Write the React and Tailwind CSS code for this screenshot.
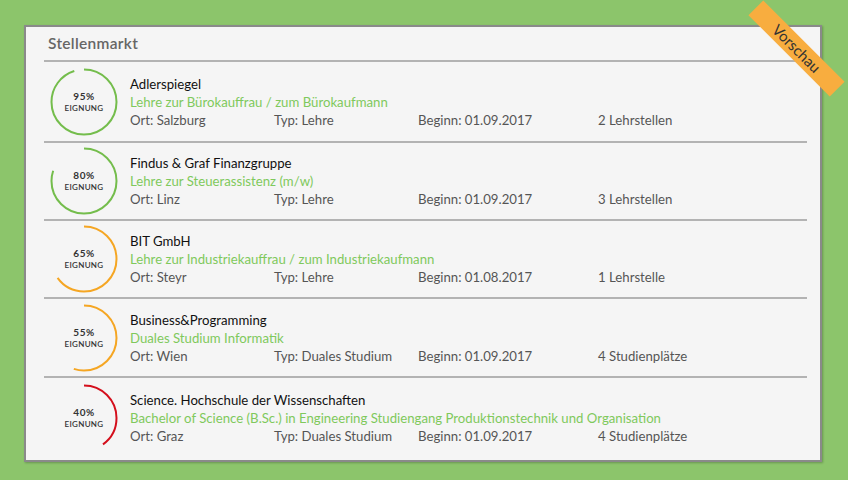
const JOBS = [
  {
    score: 95,
    color: "#74bd4c",
    company: "Adlerspiegel",
    title: "Lehre zur Bürokauffrau / zum Bürokaufmann",
    ort: "Salzburg",
    typ: "Lehre",
    beginn: "01.09.2017",
    places: "2 Lehrstellen",
    h: "h-[81px]",
  },
  {
    score: 80,
    color: "#74bd4c",
    company: "Findus & Graf Finanzgruppe",
    title: "Lehre zur Steuerassistenz (m/w)",
    ort: "Linz",
    typ: "Lehre",
    beginn: "01.09.2017",
    places: "3 Lehrstellen",
    h: "h-[78px]",
  },
  {
    score: 65,
    color: "#f5a623",
    company: "BIT GmbH",
    title: "Lehre zur Industriekauffrau / zum Industriekaufmann",
    ort: "Steyr",
    typ: "Lehre",
    beginn: "01.08.2017",
    places: "1 Lehrstelle",
    h: "h-[78px]",
  },
  {
    score: 55,
    color: "#f5a623",
    company: "Business&Programming",
    title: "Duales Studium Informatik",
    ort: "Wien",
    typ: "Duales Studium",
    beginn: "01.09.2017",
    places: "4 Studienplätze",
    h: "h-[79px]",
  },
  {
    score: 40,
    color: "#d40f1c",
    company: "Science. Hochschule der Wissenschaften",
    title: "Bachelor of Science (B.Sc.) in Engineering Studiengang Produktionstechnik und Organisation",
    ort: "Graz",
    typ: "Duales Studium",
    beginn: "01.09.2017",
    places: "4 Studienplätze",
    h: "h-[80px]",
  },
];

function Ring({ score, color }) {
  const r = 32.5;
  const c = 2 * Math.PI * r;
  return (
    <div className="relative h-[68px] w-[68px] shrink-0">
      <svg width="68" height="68" viewBox="0 0 68 68" className="absolute inset-0">
        <circle
          cx="34"
          cy="34"
          r={r}
          fill="none"
          stroke={color}
          strokeWidth="2"
          strokeDasharray={`${(c * score) / 100} ${c}`}
          transform="rotate(-90 34 34)"
        />
      </svg>
      <div className="absolute inset-0 flex flex-col items-center justify-center text-[#333] leading-[12px]">
        <span className="text-[10px] font-bold tracking-[0.5px]">{score}%</span>
        <span className="text-[8px] font-semibold tracking-[0.3px]">EIGNUNG</span>
      </div>
    </div>
  );
}

function JobRow({ job, last }) {
  return (
    <div className={`flex items-center ${job.h} ${last ? "" : "border-b-2 border-[#b3b3b3]"}`}>
      <div className="w-[86px] pl-[6px]">
        <Ring score={job.score} color={job.color} />
      </div>
      <div className="flex flex-col text-[13.2px] leading-[18px]">
        <span className="text-[#111]">{job.company}</span>
        <span className="text-[#7fc95c]">{job.title}</span>
        <div className="flex text-[#555]">
          <span className="w-[144px]">Ort: {job.ort}</span>
          <span className="w-[144px]">Typ: {job.typ}</span>
          <span className="w-[180px]">Beginn: {job.beginn}</span>
          <span>{job.places}</span>
        </div>
      </div>
    </div>
  );
}

export default function App() {
  return (
    <div
      className="relative h-[480px] w-[848px] overflow-hidden bg-[#8cc56b] pl-[24px] pt-[25px]"
      style={{ fontFamily: "Lato, 'Open Sans', sans-serif" }}
    >
      <div className="h-[437px] w-[798px] border-2 border-[#8a8a8a] bg-[#f5f5f5] pl-[18px] pr-[13px] shadow-[1px_1px_2px_rgba(0,0,0,0.25)]">
        <div className="flex h-[33px] items-center pl-[4px] text-[15.5px] font-semibold tracking-[0.3px] text-[#666]">
          Stellenmarkt
        </div>
        <div className="border-t-2 border-[#b3b3b3]">
          {JOBS.map((job, i) => (
            <JobRow key={job.company} job={job} last={i === JOBS.length - 1} />
          ))}
        </div>
      </div>
      <div className="absolute left-[739px] top-[38px] flex h-[21px] w-[115px] rotate-45 items-center justify-center bg-[#f8ad3f] text-[15px] text-[#333]">
        Vorschau
      </div>
    </div>
  );
}
